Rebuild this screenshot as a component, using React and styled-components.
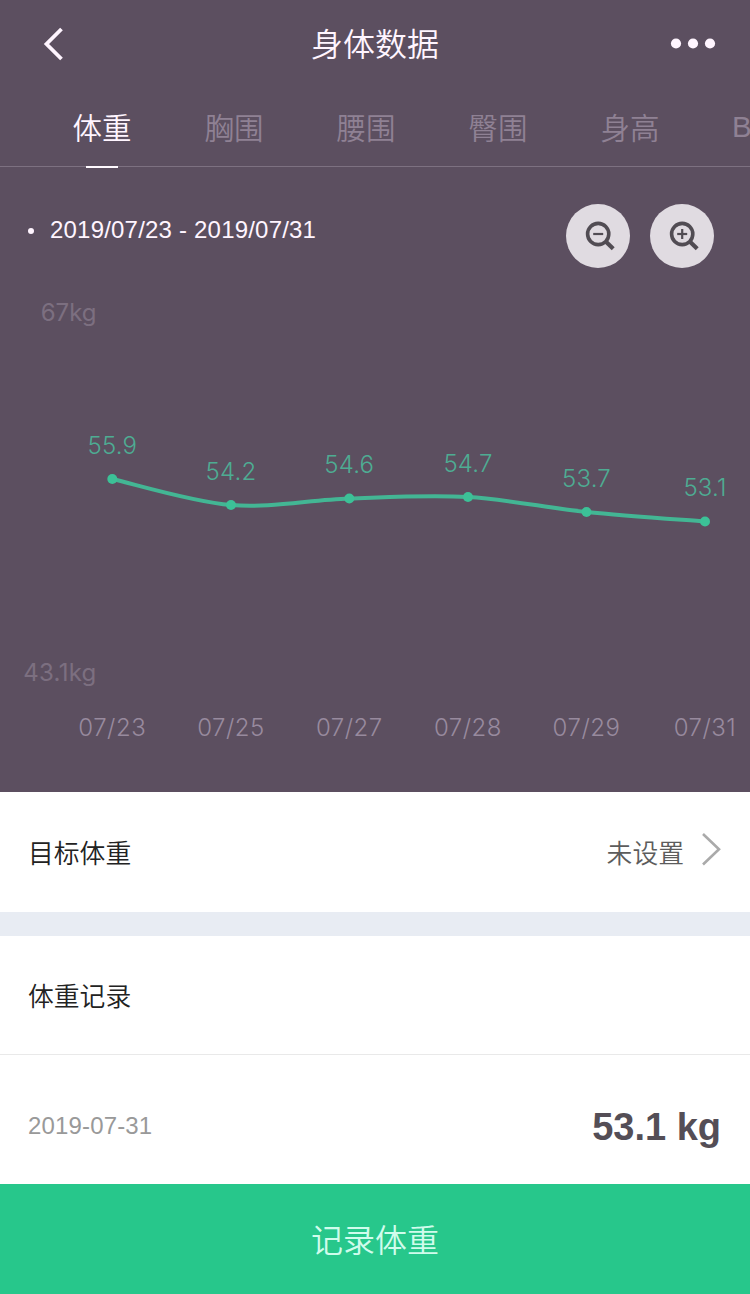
import React, { useState } from 'react';
import styled, { createGlobalStyle } from 'styled-components';

const GlobalStyle = createGlobalStyle`
  * {
    box-sizing: border-box;
  }

  body {
    margin: 0;
    background: #ffffff;
    font-family: 'Liberation Sans', 'Noto Sans CJK SC', sans-serif;
  }

  button {
    margin: 0;
    padding: 0;
    border: none;
    background: none;
    font-family: inherit;
    cursor: pointer;
  }

  svg {
    flex: none;
  }
`;

const Page = styled.div`
  display: flex;
  flex-direction: column;
  width: 750px;
  height: 1294px;
  overflow: hidden;
`;

const DataPanel = styled.section`
  display: flex;
  flex-direction: column;
  height: 792px;
  background: #5c4f60;
  color: #fff5ff;
`;

const Header = styled.header`
  display: grid;
  grid-template-columns: 120px 1fr 120px;
  align-items: center;
  height: 88px;
`;

const HeaderButton = styled.button`
  display: flex;
  justify-content: ${(props) => props.$align};
  padding: 0 34px 0 40px;
  color: inherit;
`;

const Title = styled.h1`
  margin: 0;
  padding-bottom: 4px;
  font-family: 'Noto Sans CJK SC', sans-serif;
  font-size: 32px;
  font-weight: 350;
  line-height: 46px;
  text-align: center;
`;

const TabBar = styled.nav`
  display: flex;
  height: 79px;
  padding-left: 36px;
  border-bottom: 1px solid #7d7181;
`;

const Tab = styled.button`
  position: relative;
  flex: none;
  width: 132px;
  padding-bottom: ${(props) => (props.$clipped ? '0' : '3px')};
  padding-left: ${(props) => (props.$clipped ? '36px' : '0')};
  font-family: ${(props) => (props.$clipped ? "'Liberation Sans'" : "'Noto Sans CJK SC'")}, sans-serif;
  font-size: 29.5px;
  font-weight: 350;
  text-align: ${(props) => (props.$clipped ? 'left' : 'center')};
  color: ${(props) => (props.$active ? '#fff5ff' : '#8f8194')};

  &::after {
    content: '';
    display: ${(props) => (props.$active ? 'block' : 'none')};
    position: absolute;
    bottom: -2px;
    left: 50px;
    width: 32px;
    height: 2px;
    background: #fffaff;
  }
`;

const RangeRow = styled.div`
  display: flex;
  justify-content: space-between;
  align-items: flex-start;
  height: 123px;
  padding: 37px 36px 0 28px;
`;

const DateRange = styled.div`
  display: flex;
  align-items: center;
  gap: 16px;
  padding-top: 12px;
  font-size: 24px;
  line-height: 28px;
  letter-spacing: 0.2px;
`;

const Dot = styled.span`
  width: 6px;
  height: 6px;
  margin-top: 2px;
  border-radius: 50%;
  background: currentColor;
`;

const ZoomControls = styled.div`
  display: flex;
  gap: 20px;
`;

const ZoomButton = styled.button`
  display: flex;
  align-items: center;
  justify-content: center;
  width: 64px;
  height: 64px;
  border-radius: 50%;
  background: #e0dbe1;
  color: #514c53;
`;

const ChartSvg = styled.svg`
  display: block;
  font-family: Inter, 'Liberation Sans', sans-serif;
  font-size: 24px;
`;

const ScaleLabel = styled.text`
  fill: #7c6f80;
  text-anchor: end;
`;

const ValueLabel = styled.text`
  fill: #4eac93;
  font-weight: 300;
  text-anchor: middle;
  letter-spacing: 0.2px;
`;

const DayLabel = styled.text`
  fill: #988a9e;
  font-weight: 300;
  text-anchor: middle;
  letter-spacing: 0.5px;
`;

const Row = styled.div`
  display: flex;
  align-items: center;
  justify-content: space-between;
  height: ${(props) => props.$height}px;
  padding: 0 29px 0 28px;
  background: #ffffff;
  border-bottom: ${(props) => (props.$divided ? '1px solid #e9e9e9' : 'none')};
`;

const RowLabel = styled.span`
  font-family: 'Noto Sans CJK SC', sans-serif;
  font-size: 25.8px;
  font-weight: 350;
  line-height: 38px;
  color: ${(props) => (props.$muted ? '#5c5c5c' : '#222222')};
`;

const GoalValue = styled.div`
  display: flex;
  align-items: center;
  gap: 17px;
`;

const Spacer = styled.div`
  height: 24px;
  background: #e8ecf3;
`;

const RecordDate = styled.time`
  padding-top: 13px;
  font-size: 24px;
  letter-spacing: 0.15px;
  color: #999999;
`;

const RecordValue = styled.strong`
  padding-top: 16px;
  font-size: 38px;
  color: #544e56;
`;

const SubmitButton = styled.button`
  flex: 1;
  padding-bottom: 3px;
  background: #27c78b;
  color: #d0fcec;
  font-family: 'Noto Sans CJK SC', sans-serif;
  font-size: 32px;
  font-weight: 350;
`;

const tabs = ['体重', '胸围', '腰围', '臀围', '身高', 'BMI'];

const points = [
  { day: '07/23', value: '55.9', x: 112.3, y: 189 },
  { day: '07/25', value: '54.2', x: 231, y: 215 },
  { day: '07/27', value: '54.6', x: 349.3, y: 208.5 },
  { day: '07/28', value: '54.7', x: 468, y: 207 },
  { day: '07/29', value: '53.7', x: 586.5, y: 222 },
  { day: '07/31', value: '53.1', x: 705, y: 231.5 },
];

// Catmull-Rom style smoothing between neighbouring points
const smoothPath = (pts) =>
  pts.slice(1).reduce((path, p, i) => {
    const prev = pts[i];
    const before = pts[i - 1] || prev;
    const after = pts[i + 2] || p;
    const c1 = `${prev.x + (p.x - before.x) / 6} ${prev.y + (p.y - before.y) / 6}`;
    const c2 = `${p.x - (after.x - prev.x) / 6} ${p.y - (after.y - prev.y) / 6}`;
    return `${path} C ${c1} ${c2} ${p.x} ${p.y}`;
  }, `M ${pts[0].x} ${pts[0].y}`);

const BackIcon = () => (
  <svg width="26" height="34" viewBox="0 0 26 34" fill="none" stroke="currentColor" strokeWidth="3.8">
    <path d="M21.5 2 6.5 17 21.5 32" />
  </svg>
);

const MoreIcon = () => (
  <svg width="46" height="12" viewBox="0 0 46 12" fill="currentColor">
    <circle cx="6" cy="5.5" r="5.1" />
    <circle cx="23" cy="5.5" r="5.1" />
    <circle cx="40" cy="5.5" r="5.1" />
  </svg>
);

const MagnifierIcon = ({ plus }) => (
  <svg width="34" height="34" viewBox="0 0 34 34" fill="none" stroke="currentColor">
    <circle cx="17.2" cy="15" r="10.6" strokeWidth="3.6" />
    <path d="M24.5 22.2 32.2 29.7" strokeWidth="4.2" />
    <path d="M12.2 15H22.2" strokeWidth="2.2" />
    {plus && <path d="M17.2 10V20" strokeWidth="2.2" />}
  </svg>
);

const ChevronIcon = () => (
  <svg width="20" height="38" viewBox="0 0 20 38" fill="none" stroke="#aaaaaa" strokeWidth="2.6">
    <path d="M2 1 18 16.2 2 31.5" />
  </svg>
);

const WeightChart = () => (
  <ChartSvg width="750" height="502" viewBox="0 0 750 502">
    <ScaleLabel x="96.5" y="30.5">67kg</ScaleLabel>
    <ScaleLabel x="96.5" y="390.5" letterSpacing="0.25">43.1kg</ScaleLabel>
    <path d={smoothPath(points)} fill="none" stroke="#43b694" strokeWidth="4" />
    {points.map((p) => (
      <g key={p.day}>
        <circle cx={p.x} cy={p.y} r="5" fill="#3cc197" />
        <ValueLabel x={p.x} y={p.y - 25.5}>{p.value}</ValueLabel>
        <DayLabel x={p.x} y="446">{p.day}</DayLabel>
      </g>
    ))}
  </ChartSvg>
);

const App = () => {
  const [activeTab, setActiveTab] = useState('体重');

  return (
    <Page>
      <GlobalStyle />
      <DataPanel>
        <Header>
          <HeaderButton $align="flex-start" aria-label="返回">
            <BackIcon />
          </HeaderButton>
          <Title>身体数据</Title>
          <HeaderButton $align="flex-end" aria-label="更多">
            <MoreIcon />
          </HeaderButton>
        </Header>

        <TabBar>
          {tabs.map((tab) => (
            <Tab
              key={tab}
              $active={tab === activeTab}
              $clipped={tab === 'BMI'}
              onClick={() => setActiveTab(tab)}
            >
              {tab}
            </Tab>
          ))}
        </TabBar>

        <RangeRow>
          <DateRange>
            <Dot />
            2019/07/23 - 2019/07/31
          </DateRange>
          <ZoomControls>
            <ZoomButton aria-label="缩小">
              <MagnifierIcon />
            </ZoomButton>
            <ZoomButton aria-label="放大">
              <MagnifierIcon plus />
            </ZoomButton>
          </ZoomControls>
        </RangeRow>

        <WeightChart />
      </DataPanel>

      <Row $height={120}>
        <RowLabel>目标体重</RowLabel>
        <GoalValue>
          <RowLabel $muted>未设置</RowLabel>
          <ChevronIcon />
        </GoalValue>
      </Row>
      <Spacer />
      <Row $height={119} $divided>
        <RowLabel>体重记录</RowLabel>
      </Row>
      <Row $height={129}>
        <RecordDate>2019-07-31</RecordDate>
        <RecordValue>53.1 kg</RecordValue>
      </Row>

      <SubmitButton>记录体重</SubmitButton>
    </Page>
  );
};

export default App;
